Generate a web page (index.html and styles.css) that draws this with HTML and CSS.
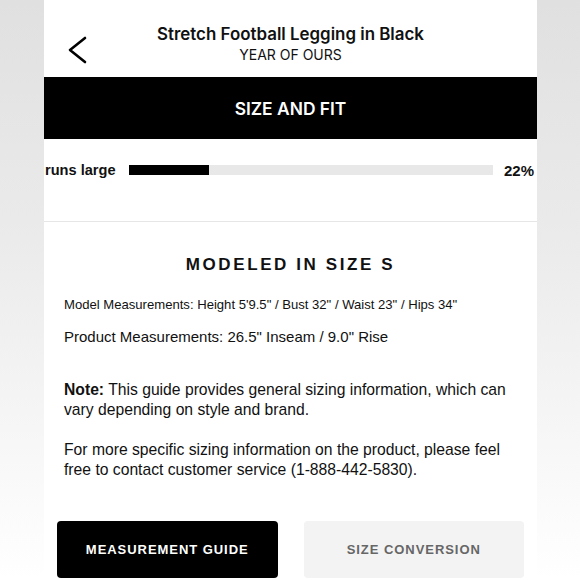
FILE: index.html
```html
<!DOCTYPE html>
<html>
<head>
<meta charset="utf-8">
<link rel="stylesheet" href="styles.css">
</head>
<body>
<div class="panel">
  <header class="top">
    <div class="back">
      <svg width="20" height="28" viewBox="0 0 20 28"><polyline points="18,2 3,14 18,26" fill="none" stroke="#000" stroke-width="2.6" stroke-linecap="round" stroke-linejoin="round"/></svg>
    </div>
    <div class="titles">
      <div class="title">Stretch Football Legging in Black</div>
      <div class="brand">YEAR OF OURS</div>
    </div>
    <div></div>
  </header>
  <div class="bar-head">SIZE AND FIT</div>
  <div class="fit-row">
    <span class="fit-label">runs large</span>
    <div class="track"><div class="fill" style="width:22%"></div></div>
    <span class="fit-pct">22%</span>
  </div>
  <section class="content">
    <h2 class="modeled">MODELED IN SIZE S</h2>
    <p class="model">Model Measurements: Height 5'9.5" / Bust 32" / Waist 23" / Hips 34"</p>
    <p class="product">Product Measurements: 26.5" Inseam / 9.0" Rise</p>
    <p class="note"><b>Note:</b> This guide provides general sizing information, which can vary depending on style and brand.</p>
    <p class="more">For more specific sizing information on the product, please feel free to contact customer service (1-888-442-5830).</p>
  </section>
  <div class="buttons">
    <button class="btn dark">MEASUREMENT GUIDE</button>
    <button class="btn light">SIZE CONVERSION</button>
  </div>
</div>
</body>
</html>
```

FILE: styles.css
```css
html, body {
  margin: 0;
  padding: 0;
}
body {
  width: 580px;
  height: 580px;
  overflow: hidden;
  background: linear-gradient(to bottom, #e0e0e0 0%, #ececec 45%, #fafafa 85%, #ffffff 100%);
}
.panel {
  margin-left: 44px;
  width: 493px;
  height: 580px;
  background: #fff;
}
.top {
  height: 77px;
  display: grid;
  grid-template-columns: 1fr auto 1fr;
  align-items: start;
}
.back {
  padding-left: 23px;
  padding-top: 36px;
  display: flex;
}
.back svg {
  display: block;
}
.titles {
  text-align: center;
  padding-top: 24px;
}
.title {
  font-family: "Inter", sans-serif;
  font-weight: 600;
  font-size: 16.9px;
  line-height: 21px;
  color: #111;
}
.brand {
  font-family: "Inter", sans-serif;
  font-weight: 400;
  font-size: 14px;
  line-height: 20px;
  color: #111;
  margin-top: 0px;
}
.bar-head {
  height: 62px;
  background: #000;
  color: #fff;
  display: flex;
  align-items: center;
  justify-content: center;
  font-family: "Inter", sans-serif;
  font-weight: 600;
  font-size: 17.4px;
  padding-top: 1px;
  box-sizing: border-box;
}
.fit-row {
  height: 83px;
  box-sizing: border-box;
  display: flex;
  align-items: center;
  border-bottom: 1px solid #e6e6e6;
  padding: 0 3px 20px 1px;
  font-family: "Liberation Sans", Arial, sans-serif;
  font-weight: 700;
  font-size: 14.6px;
  color: #111;
}
.fit-label {
  margin-right: 13px;
}
.fit-pct {
  font-size: 15px;
}
.track {
  flex: 1;
  height: 10px;
  background: #e8e8e8;
  margin-right: 11px;
  display: flex;
}
.fill {
  background: #000;
  height: 100%;
}
.content {
  padding: 33px 20px 0;
  font-family: "Liberation Sans", Arial, sans-serif;
  color: #111;
}
.modeled {
  margin: 0;
  text-align: center;
  font-size: 17px;
  line-height: 20px;
  letter-spacing: 2.6px;
  font-weight: 700;
}
.model {
  margin: 21px 0 0;
  font-size: 13.1px;
  line-height: 18px;
}
.product {
  margin: 13px 0 0;
  font-size: 15px;
  line-height: 20px;
}
.note {
  margin: 33px 0 0;
  font-size: 15.7px;
  line-height: 20px;
}
.more {
  margin: 20px 0 0;
  font-size: 15.7px;
  line-height: 20px;
}
.buttons {
  display: grid;
  grid-template-columns: 1fr 1fr;
  gap: 26px;
  padding: 0 13px;
  margin-top: 41px;
}
.btn {
  height: 57px;
  border: none;
  border-radius: 4px;
  font-family: "Liberation Sans", Arial, sans-serif;
  font-weight: 700;
  font-size: 13px;
  letter-spacing: 0.95px;
  padding: 0;
}
.btn.dark {
  background: #000;
  color: #fff;
}
.btn.light {
  background: #f3f3f3;
  color: #666;
}
```
